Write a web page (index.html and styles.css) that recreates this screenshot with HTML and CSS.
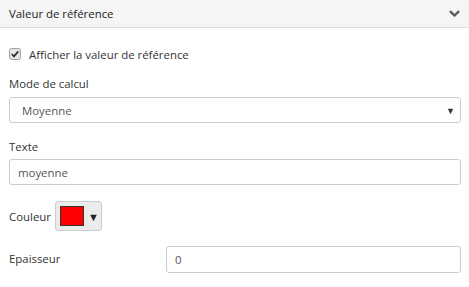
FILE: index.html
```
<!DOCTYPE html>
<html>
<head>
<meta charset="utf-8">
<link rel="stylesheet" href="styles.css">
</head>
<body>
<div class="panel">
  <div class="panel-header">
    <span class="title">Valeur de référence</span>
    <svg class="chevron" width="11" height="7" viewBox="0 0 11 7"><path d="M1 1.2 L5.5 5.5 L10 1.2" fill="none" stroke="#5a5a5a" stroke-width="2.4"/></svg>
  </div>
  <div class="panel-body">
    <label class="check-row">
      <svg class="checkbox" width="12" height="12" viewBox="0 0 12 12"><rect x="0.5" y="0.5" width="11" height="11" rx="2" fill="#e6e6e6" stroke="#a0a0a0"/><path d="M2.8 6.2 L5 8.4 L9.3 3.3" fill="none" stroke="#333" stroke-width="1.8"/></svg>
      <span>Afficher la valeur de référence</span>
    </label>
    <div class="label first">Mode de calcul</div>
    <div class="select">
      <span>Moyenne</span>
      <span class="caret">▼</span>
    </div>
    <div class="label">Texte</div>
    <div class="input text">moyenne</div>
    <div class="color-row">
      <span class="color-label">Couleur</span>
      <div class="color-btn">
        <span class="swatch"></span>
        <span class="color-caret">▼</span>
      </div>
    </div>
    <div class="thick-row">
      <span class="thick-label">Epaisseur</span>
      <div class="input num">0</div>
    </div>
  </div>
</div>
</body>
</html>
```
FILE: styles.css
```
html, body {
  margin: 0;
  padding: 0;
  background: #fff;
}
body {
  font-family: "Open Sans", "Noto Sans", sans-serif;
  font-size: 11.4px;
  color: #333;
}
.panel-header {
  height: 27px;
  background: #f5f5f5;
  border-bottom: 1px solid #dcdcdc;
  display: flex;
  align-items: center;
  justify-content: space-between;
  padding: 0 8px 0 9px;
}
.title {
  color: #222;
}
.chevron {
  display: block;
  margin-right: 1px;
}
.panel-body {
  padding: 0 8px 0 9px;
}
.check-row {
  display: flex;
  align-items: center;
  height: 18px;
  margin-top: 17px;
  gap: 8px;
}
.checkbox {
  display: block;
}
.label {
  height: 18px;
  line-height: 18px;
  margin-top: 15px;
}
.label.first {
  margin-top: 12px;
}
.select {
  margin-top: 4px;
  height: 26px;
  box-sizing: border-box;
  border: 1px solid #ccc;
  border-radius: 3px;
  display: flex;
  align-items: center;
  justify-content: space-between;
  padding: 0 5px 0 12px;
  color: #555;
}
.caret {
  font-size: 9px;
  color: #333;
}
.input {
  box-sizing: border-box;
  border: 1px solid #ccc;
  border-radius: 3px;
  display: flex;
  align-items: center;
  color: #555;
  padding-left: 8px;
}
.input.text {
  margin-top: 3px;
  height: 26px;
}
.color-row {
  display: flex;
  align-items: center;
  margin-top: 16px;
  gap: 4px;
}
.color-btn {
  width: 47px;
  height: 30px;
  box-sizing: border-box;
  border: 1px solid #ccc;
  border-radius: 3px;
  background: #ececec;
  display: flex;
  align-items: center;
  padding-left: 4px;
  gap: 4px;
}
.swatch {
  width: 24px;
  height: 20px;
  box-sizing: border-box;
  background: #ff0000;
  border: 1px solid #333;
}
.color-caret {
  font-size: 11px;
  color: #222;
}
.thick-row {
  display: grid;
  grid-template-columns: 157px 1fr;
  align-items: center;
  margin-top: 15px;
}
.thick-label {
  margin-top: -3px;
}
.input.num {
  height: 27px;
}
```
